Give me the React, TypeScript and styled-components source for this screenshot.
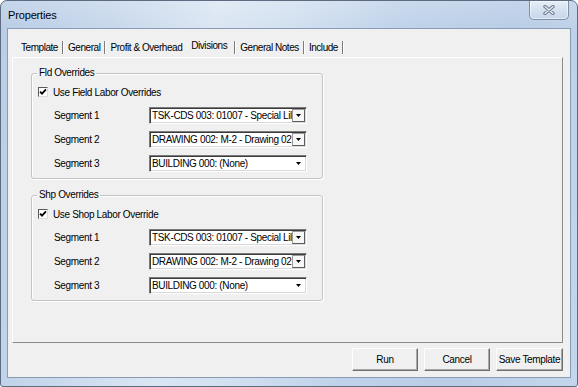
import React from 'react';
import styled, { createGlobalStyle } from 'styled-components';

const GlobalStyle = createGlobalStyle`
  html, body { margin: 0; padding: 0; background: #ffffff; }
  body { font-family: "Liberation Sans", Arial, sans-serif; }
  *, *::before, *::after { box-sizing: border-box; }
`;

const Window = styled.div`
  width: 578px;
  height: 387px;
  display: flex;
  flex-direction: column;
  border: 1px solid #5d6c80;
  border-radius: 7px 7px 3px 3px;
  padding: 0 6px 8px 6px;
  overflow: hidden;
  background:
    linear-gradient(180deg, rgba(255,255,255,0.18) 0px, rgba(255,255,255,0) 27px),
    linear-gradient(100deg, #b9cde6 0%, #c8d8ec 18%, #dbe6f3 34%, #d2e0f0 46%, #c0d3ea 62%, #b9cde6 80%, #c4d6eb 100%);
`;

const TitleBar = styled.div`
  height: 27px;
  display: flex;
  align-items: flex-start;
  flex-shrink: 0;
`;

const Title = styled.div`
  margin: 7px 0 0 1px;
  font-size: 11px;
  line-height: 14px;
  letter-spacing: -0.15px;
  color: #000;
`;

const CloseButton = styled.div`
  margin-left: auto;
  margin-right: 2px;
  width: 40px;
  height: 19px;
  display: flex;
  align-items: center;
  justify-content: center;
  border: 1px solid #7f8fa6;
  border-top: none;
  border-radius: 0 0 5px 5px;
  background: linear-gradient(180deg, #e6eef7 0%, #d5e1ef 50%, #c6d6ea 100%);
  box-shadow: inset 0 0 0 1px rgba(255,255,255,0.55);
`;

const Client = styled.div`
  flex: 1;
  display: flex;
  flex-direction: column;
  border: 1px solid #8a9cb4;
  background: #f0f0f0;
  padding-bottom: 6px;
`;

const TabStrip = styled.div`
  display: flex;
  align-items: flex-start;
  height: 13px;
  margin-top: 12px;
  padding-left: 8px;
  flex-shrink: 0;
`;

const Tab = styled.div<{ $active?: boolean; $divider?: boolean }>`
  height: 13px;
  display: flex;
  align-items: flex-start;
  padding: ${p => (p.$active ? '0 7px 0 4px' : '0 4px 0 5px')};
  border-right: 1px solid ${p => (p.$divider ? '#7c7c7c' : 'transparent')};
  box-shadow: ${p => (p.$divider ? '1px 0 0 #ffffff' : 'none')};
`;

const TabLabel = styled.span<{ $active?: boolean }>`
  font-size: 10px;
  line-height: 13px;
  letter-spacing: -0.45px;
  color: #000;
  white-space: nowrap;
  margin-top: ${p => (p.$active ? '-2px' : '0')};
`;

const Panel = styled.div`
  flex: 1;
  margin: 3px 7px 0 4px;
  border-top: 1px solid #ffffff;
  border-left: 1px solid #ffffff;
  border-right: 1px solid #8c8c8c;
  border-bottom: 1px solid #8c8c8c;
  padding: 9px 0 0 18px;
  display: flex;
  flex-direction: column;
  gap: 10px;
`;

const GroupBox = styled.fieldset`
  margin: 0;
  width: 292px;
  padding: 0 0 6px 0;
  border: 1px solid #c4c4c4;
  border-radius: 3px;
  box-shadow: 1px 1px 0 #ffffff, inset 1px 1px 0 #ffffff;
  min-width: 0;
`;

const Legend = styled.legend`
  margin-left: 5px;
  padding: 0 2px;
  font-size: 10px;
  line-height: 12px;
  letter-spacing: -0.35px;
  color: #000;
`;

const CheckRow = styled.label`
  display: flex;
  align-items: center;
  gap: 5px;
  height: 14px;
  margin: 6px 0 0 6px;
  font-size: 10px;
  letter-spacing: -0.35px;
  color: #000;
`;

const CheckBox = styled.span`
  width: 10px;
  height: 10px;
  display: flex;
  align-items: center;
  justify-content: center;
  background: #fff;
  border: 1px solid;
  border-color: #5a5a5a #dcdcdc #dcdcdc #5a5a5a;
  flex-shrink: 0;
`;

const Rows = styled.div`
  display: flex;
  flex-direction: column;
  gap: 7px;
  margin-top: 8px;
`;

const FieldRow = styled.div`
  display: flex;
  align-items: center;
  height: 17px;
  margin-left: 22px;
`;

const FieldLabel = styled.span`
  width: 95px;
  font-size: 10px;
  letter-spacing: -0.35px;
  color: #000;
`;

const Combo = styled.div`
  width: 158px;
  height: 17px;
  display: flex;
  padding: 1px;
  background: #ffffff;
  border: 1px solid;
  border-color: #7a7a7a #ffffff #ffffff #7a7a7a;
  box-shadow: inset 1px 1px 0 #3c3c3c, inset -1px -1px 0 #d8d8d8;
`;

const ComboText = styled.span`
  flex: 1;
  overflow: hidden;
  white-space: nowrap;
  padding-left: 1px;
  font-size: 10px;
  line-height: 13px;
  letter-spacing: -0.35px;
  color: #000;
`;

const ComboButton = styled.span<{ $plain?: boolean }>`
  width: 13px;
  height: 13px;
  flex-shrink: 0;
  display: flex;
  align-items: center;
  justify-content: center;
  background: ${p => (p.$plain ? '#ffffff' : '#f7f7f7')};
  border: 1px solid;
  border-color: ${p => (p.$plain ? 'transparent' : '#9a9a9a #5e5e5e #5e5e5e #9a9a9a')};
`;

const ButtonRow = styled.div`
  display: flex;
  justify-content: flex-end;
  gap: 6px;
  margin: 5px 7px 0 0;
  flex-shrink: 0;
`;

const Button = styled.button<{ $w: number }>`
  width: ${p => p.$w}px;
  height: 23px;
  padding: 0 1px;
  background: #f0f0f0;
  border: 1px solid;
  border-color: #ffffff #6e6e6e #6e6e6e #ffffff;
  box-shadow: inset -1px -1px 0 #a8a8a8;
  font-family: "Liberation Sans", Arial, sans-serif;
  font-size: 10px;
  letter-spacing: -0.35px;
  color: #000;
  white-space: nowrap;
`;

const Arrow = () => (
  <svg width="5" height="3" viewBox="0 0 5 3">
    <path d="M0 0H5L2.5 3Z" fill="#000" />
  </svg>
);

const Check = () => (
  <svg width="8" height="8" viewBox="0 0 8 8">
    <path d="M1 3.6L3 5.6L7 1.4" stroke="#000" strokeWidth="1.8" fill="none" />
  </svg>
);

const CloseGlyph = () => (
  <svg width="12" height="10" viewBox="0 0 12 10">
    <path d="M2 1.5L10 8.5M10 1.5L2 8.5" stroke="#6c7a8e" strokeWidth="3.4" strokeLinecap="round" />
    <path d="M2 1.5L10 8.5M10 1.5L2 8.5" stroke="#eef3f8" strokeWidth="1.3" strokeLinecap="round" />
  </svg>
);

type Segment = { label: string; value: string; plain?: boolean };

const segments: Segment[] = [
  { label: 'Segment 1', value: 'TSK-CDS 003: 01007 - Special Lil' },
  { label: 'Segment 2', value: 'DRAWING 002: M-2 - Drawing 02' },
  { label: 'Segment 3', value: 'BUILDING 000: (None)', plain: true },
];

const groups = [
  { caption: 'Fld Overrides', check: 'Use Field Labor Overrides' },
  { caption: 'Shp Overrides', check: 'Use Shop Labor Override' },
];

const tabs = [
  { name: 'Template', divider: true },
  { name: 'General', divider: true },
  { name: 'Profit & Overhead', divider: false },
  { name: 'Divisions', divider: true, active: true },
  { name: 'General Notes', divider: true },
  { name: 'Include', divider: true },
];

export default function App() {
  return (
    <>
      <GlobalStyle />
      <Window>
        <TitleBar>
          <Title>Properties</Title>
          <CloseButton>
            <CloseGlyph />
          </CloseButton>
        </TitleBar>
        <Client>
          <TabStrip>
            {tabs.map(t => (
              <Tab key={t.name} $active={t.active} $divider={t.divider}>
                <TabLabel $active={t.active}>{t.name}</TabLabel>
              </Tab>
            ))}
          </TabStrip>
          <Panel>
            {groups.map(g => (
              <GroupBox key={g.caption}>
                <Legend>{g.caption}</Legend>
                <CheckRow>
                  <CheckBox>
                    <Check />
                  </CheckBox>
                  {g.check}
                </CheckRow>
                <Rows>
                  {segments.map(s => (
                    <FieldRow key={s.label}>
                      <FieldLabel>{s.label}</FieldLabel>
                      <Combo>
                        <ComboText>{s.value}</ComboText>
                        <ComboButton $plain={s.plain}>
                          <Arrow />
                        </ComboButton>
                      </Combo>
                    </FieldRow>
                  ))}
                </Rows>
              </GroupBox>
            ))}
          </Panel>
          <ButtonRow>
            <Button $w={66}>Run</Button>
            <Button $w={66}>Cancel</Button>
            <Button $w={67}>Save Template</Button>
          </ButtonRow>
        </Client>
      </Window>
    </>
  );
}
